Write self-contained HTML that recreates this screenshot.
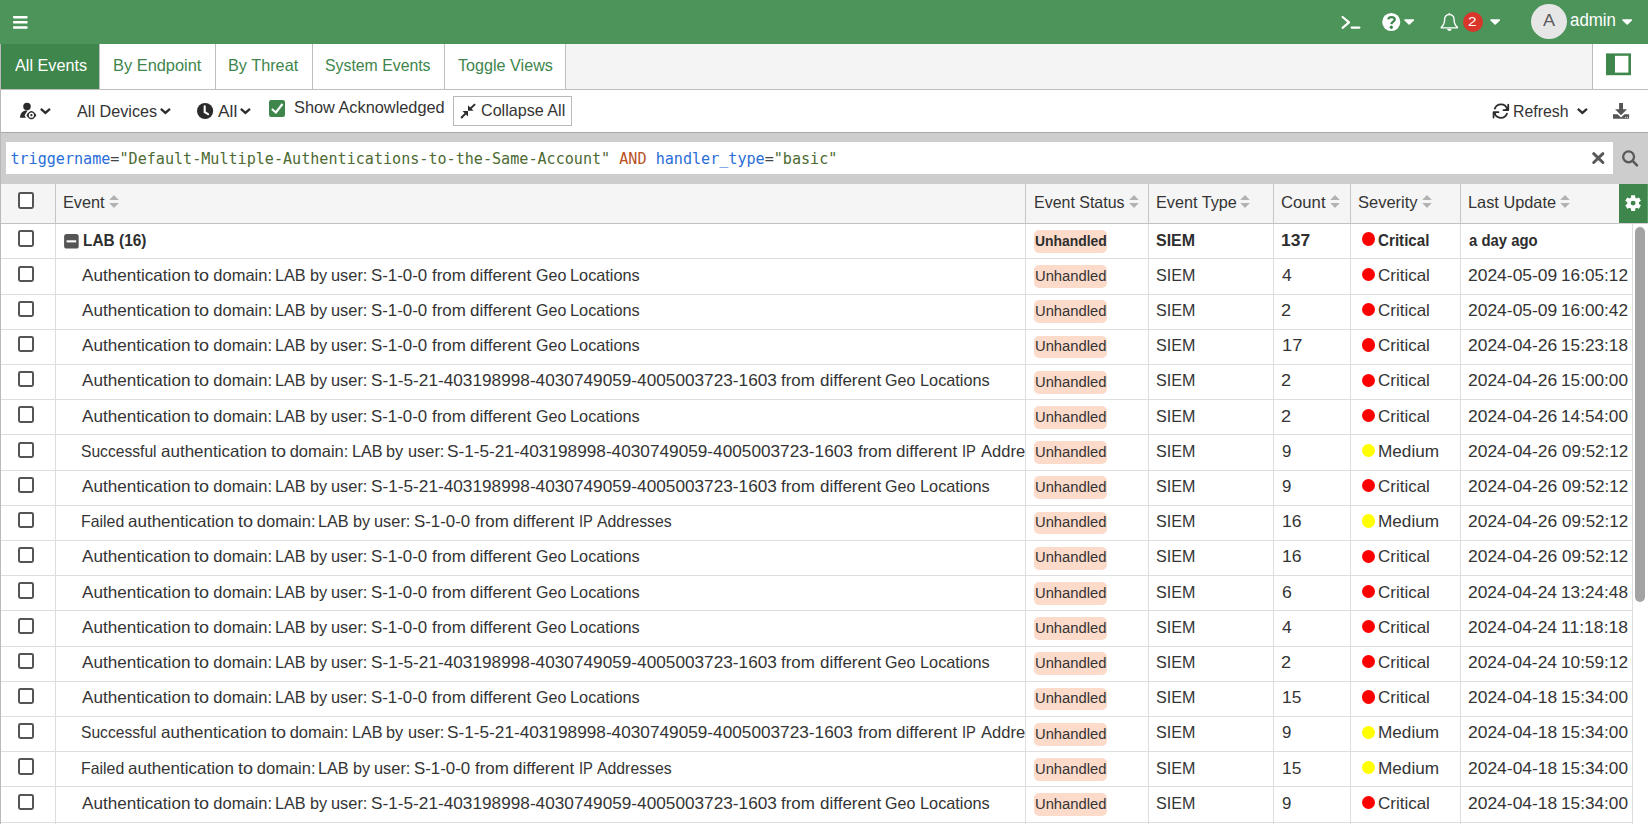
<!DOCTYPE html>
<html><head><meta charset="utf-8"><title>FortiAnalyzer - Event Monitor</title><style>
html,body{margin:0;padding:0;background:#fff}
body{width:1648px;height:824px;overflow:hidden;position:relative;font-family:'Liberation Sans',sans-serif;color:#343434}
.r{position:absolute;display:block}
.t{position:absolute;display:block;white-space:pre;line-height:30px;height:30px;transform-origin:0 0;font-size:16.5px}
.cb{width:11.6px;height:12.4px;border:2px solid #555;border-radius:2.4px;background:#fff}
.q{font-family:'DejaVu Sans Mono','Liberation Mono',monospace;font-size:15.1px;line-height:20px;white-space:pre}
</style></head><body>
<div class="r" style="left:0px;top:0px;width:1648px;height:44px;background:#4c9459;"></div>
<svg class="r" style="left:12px;top:15px" width="17" height="15" viewBox="0 0 17 15"><g fill="#fff"><rect x="1" y="1" width="14.6" height="2.4" rx="0.8"/><rect x="1" y="6.1" width="14.6" height="2.5" rx="0.8"/><rect x="1" y="11.2" width="14.6" height="2.5" rx="0.8"/></g></svg>
<svg class="r" style="left:1340px;top:14px" width="22" height="17" viewBox="0 0 22 17"><path d="M2.6 3 L9 8.4 L2.6 13.8" fill="none" stroke="#fff" stroke-width="2.2" stroke-linecap="round" stroke-linejoin="round"/><path d="M11.6 13.6 L19.4 13.6" stroke="#fff" stroke-width="2.2" stroke-linecap="round"/></svg>
<svg class="r" style="left:1381px;top:12px" width="21" height="21" viewBox="1381 12 21 21"><circle cx="1391.25" cy="22.02" r="9.05" fill="#fff"/><path d="M1388.35 19.45 C1388.6 17.75 1389.8 17.15 1391.45 17.15 C1393.4 17.15 1394.75 18.05 1394.75 19.6 C1394.75 21.7 1391.5 21.6 1391.4 24.1" fill="none" stroke="#3e864c" stroke-width="2.3" stroke-linecap="butt"/><circle cx="1391.3" cy="27.25" r="1.65" fill="#3e864c"/></svg>
<svg class="r" style="left:1404px;top:19px" width="10.4" height="6" viewBox="0 0 10.4 6"><path d="M1 1 L9.4 1 L5.2 5 Z" fill="#fff" stroke="#fff" stroke-width="1.6" stroke-linejoin="round"/></svg>
<svg class="r" style="left:1439px;top:11px" width="21" height="22" viewBox="1439 11 21 22"><path d="M1449.35 14.6 C1446.3 14.6 1444.6 16.9 1444.6 19.8 C1444.6 23.6 1443.4 25.6 1441.3 27.3 L1441.3 27.85 L1457.4 27.85 L1457.4 27.3 C1455.3 25.6 1454.1 23.6 1454.1 19.8 C1454.1 16.9 1452.4 14.6 1449.35 14.6 Z" fill="none" stroke="#fff" stroke-width="1.4" stroke-linejoin="round"/><circle cx="1449.35" cy="13.9" r="0.95" fill="#fff"/><path d="M1447.1 28.7 L1451.6 28.7 C1451.4 30.2 1450.5 30.95 1449.35 30.95 C1448.2 30.95 1447.3 30.2 1447.1 28.7 Z" fill="#fff"/></svg>
<div class="r" style="left:1462.9px;top:12.4px;width:20.1px;height:20.1px;border-radius:50%;background:#d9352b"></div>
<svg class="r" style="left:1490px;top:19px" width="10.4" height="6" viewBox="0 0 10.4 6"><path d="M1 1 L9.4 1 L5.2 5 Z" fill="#fff" stroke="#fff" stroke-width="1.6" stroke-linejoin="round"/></svg>
<div class="r" style="left:1531px;top:3.8px;width:36.1px;height:35.2px;border-radius:50%;background:#e6e6e6"></div>
<svg class="r" style="left:1622px;top:19px" width="10.4" height="6" viewBox="0 0 10.4 6"><path d="M1 1 L9.4 1 L5.2 5 Z" fill="#fff" stroke="#fff" stroke-width="1.6" stroke-linejoin="round"/></svg>
<div class="r" style="left:0px;top:44px;width:1648px;height:45px;background:#f4f4f4;"></div>
<div class="r" style="left:1px;top:44px;width:98px;height:45px;background:#3e864c;"></div>
<div class="r" style="left:99px;top:44px;width:466px;height:45px;background:#fff;"></div>
<div class="r" style="left:99px;top:44px;width:1px;height:45px;background:#bebebe;"></div>
<div class="r" style="left:215px;top:44px;width:1px;height:45px;background:#bebebe;"></div>
<div class="r" style="left:312px;top:44px;width:1px;height:45px;background:#bebebe;"></div>
<div class="r" style="left:444px;top:44px;width:1px;height:45px;background:#bebebe;"></div>
<div class="r" style="left:565px;top:44px;width:1px;height:45px;background:#bebebe;"></div>
<div class="r" style="left:1593px;top:44px;width:55px;height:45px;background:#fff;"></div>
<div class="r" style="left:1592px;top:44px;width:1px;height:45px;background:#bdbdbd;"></div>
<div class="r" style="left:0px;top:89px;width:1648px;height:1px;background:#bdbdbd;"></div>
<svg class="r" style="left:1606px;top:53px" width="26" height="23" viewBox="0 0 26 23"><rect x="0" y="0.4" width="25" height="21.8" fill="#3e864c"/><rect x="9" y="2.8" width="13.4" height="16.8" fill="#fff"/></svg>
<div class="r" style="left:0px;top:90px;width:1648px;height:42px;background:#fff;"></div>
<div class="r" style="left:0px;top:132px;width:1648px;height:1px;background:#a9a9a9;"></div>
<svg class="r" style="left:18px;top:100px" width="20" height="21" viewBox="18 100 20 21"><circle cx="27" cy="106.45" r="3.75" fill="#2b2b2b"/><path d="M20 117.8 C20.2 113.6 22.4 110.9 25.6 110.5 L27.7 110.4 L24.6 115.2 L25.9 117.8 Z" fill="#2b2b2b"/><path d="M26.4 115.15 C28.4 112.1 30 111.05 31.4 111.05 C32.8 111.05 34.4 112.1 36.4 115.15 C34.4 118.2 32.8 119.25 31.4 119.25 C30 119.25 28.4 118.2 26.4 115.15 Z" fill="#2b2b2b"/><circle cx="31.4" cy="115.15" r="2.55" fill="#fff"/><circle cx="31.4" cy="115.15" r="1.1" fill="#2b2b2b"/></svg>
<svg class="r" style="left:39.85px;top:107.75px" width="11" height="7" viewBox="0 0 11 7"><path d="M0.85 0.95 L5.4 4.95 L9.95 0.95" fill="none" stroke="#2f2f2f" stroke-width="2.3" stroke-linecap="butt" stroke-linejoin="miter"/></svg>
<svg class="r" style="left:159.9px;top:107.75px" width="11" height="7" viewBox="0 0 11 7"><path d="M0.85 0.95 L5.4 4.95 L9.95 0.95" fill="none" stroke="#2f2f2f" stroke-width="2.3" stroke-linecap="butt" stroke-linejoin="miter"/></svg>
<svg class="r" style="left:196px;top:102px" width="18" height="18" viewBox="196 102 18 18"><circle cx="205.1" cy="111" r="8.1" fill="#2b2b2b"/><path d="M204.7 106.3 L204.7 112.1 L208.1 114.1" fill="none" stroke="#fff" stroke-width="2.1" stroke-linecap="round" stroke-linejoin="miter"/></svg>
<svg class="r" style="left:239.95px;top:107.75px" width="11" height="7" viewBox="0 0 11 7"><path d="M0.85 0.95 L5.4 4.95 L9.95 0.95" fill="none" stroke="#2f2f2f" stroke-width="2.3" stroke-linecap="butt" stroke-linejoin="miter"/></svg>
<svg class="r" style="left:268px;top:99px" width="18" height="19" viewBox="268 99 18 19"><rect x="269" y="99.9" width="16" height="17" rx="2.2" fill="#3e864c"/><path d="M271.9 109 L275.9 112.5 L282.5 104" fill="none" stroke="#fff" stroke-width="2.1" stroke-linecap="butt" stroke-linejoin="miter"/></svg>
<div class="r" style="left:453px;top:96px;width:117px;height:28px;border:1px solid #b9b9b9;background:#fff"></div>
<svg class="r" style="left:460px;top:103px" width="17" height="16" viewBox="460 103 17 16"><g stroke="#2b2b2b" stroke-width="2" fill="none"><path d="M475.1 104.1 L470.6 108.4"/><path d="M461.1 118 L465.5 113.6"/></g><path d="M468 110.8 L468 105.3 L473.6 110.8 Z" fill="#2b2b2b"/><path d="M468 111.1 L462.5 111.1 L468 116.6 Z" fill="#2b2b2b"/></svg>
<svg class="r" style="left:1491px;top:102px" width="20" height="18" viewBox="1491 102 20 18"><g fill="none" stroke="#2b2b2b" stroke-width="1.75" stroke-linecap="round" stroke-linejoin="round"><path d="M1494.8 108.6 A6.6 6.6 0 0 1 1507.2 108.9"/><path d="M1508.25 104.7 L1508.25 110.05 L1503.4 110.05"/><path d="M1507.0 113.6 A6.6 6.6 0 0 1 1494.6 113.3"/><path d="M1493.55 117.5 L1493.55 112.15 L1498.4 112.15"/></g><path d="M1508.25 106.2 L1508.25 110.05 L1504.6 110.05 Z" fill="#2b2b2b"/><path d="M1493.55 116 L1493.55 112.15 L1497.2 112.15 Z" fill="#2b2b2b"/></svg>
<svg class="r" style="left:1576.9px;top:107.7px" width="11" height="7" viewBox="0 0 11 7"><path d="M0.85 0.95 L5.4 4.95 L9.95 0.95" fill="none" stroke="#2f2f2f" stroke-width="2.3" stroke-linecap="butt" stroke-linejoin="miter"/></svg>
<svg class="r" style="left:1612px;top:102px" width="18" height="18" viewBox="1612 102 18 18"><path d="M1619.1 102.9 L1623 102.9 L1623 109.2 L1627 109.2 L1621.05 115.3 L1615.1 109.2 L1619.1 109.2 Z" fill="#555"/><path d="M1613 114.2 L1617.6 114.2 L1621.05 117.4 L1624.5 114.2 L1629.1 114.2 L1629.1 118.7 L1613 118.7 Z" fill="#555"/><rect x="1625" y="116.8" width="1.1" height="1.1" fill="#ddd"/><rect x="1626.9" y="116.8" width="1.1" height="1.1" fill="#ddd"/></svg>
<div class="r" style="left:0px;top:133px;width:1648px;height:51px;background:#cdcdcd;"></div>
<div class="r" style="left:6px;top:142px;width:1607px;height:32px;background:#fff;"></div>
<div class="r q" style="left:10.4px;top:149px;"><span style="color:#2a6ed8">triggername</span><span style="color:#444">=</span><span style="color:#4d6a32">"Default-Multiple-Authentications-to-the-Same-Account"</span> <span style="color:#b9521f">AND</span> <span style="color:#2a6ed8">handler_type</span><span style="color:#444">=</span><span style="color:#4d6a32">"basic"</span></div>
<svg class="r" style="left:1591px;top:151px" width="15" height="15" viewBox="1591 151 15 15"><path d="M1593.7 153.7 L1602.9 162.5 M1602.9 153.7 L1593.7 162.5" stroke="#595959" stroke-width="3" stroke-linecap="round"/></svg>
<svg class="r" style="left:1620px;top:148px" width="20" height="20" viewBox="1620 148 20 20"><circle cx="1628.6" cy="156.8" r="5.45" fill="none" stroke="#595959" stroke-width="2.3"/><path d="M1632.9 161.1 L1637.0 165.3" stroke="#595959" stroke-width="2.5" stroke-linecap="round"/></svg>
<div class="r" style="left:0px;top:184px;width:1648px;height:39px;background:#f5f5f5;"></div>
<div class="r" style="left:1619px;top:184px;width:29px;height:39px;background:#3e864c;"></div>
<div class="r" style="left:55px;top:184px;width:1px;height:39px;background:#c6c6c6;"></div>
<div class="r" style="left:1025px;top:184px;width:1px;height:39px;background:#c6c6c6;"></div>
<div class="r" style="left:1148px;top:184px;width:1px;height:39px;background:#c6c6c6;"></div>
<div class="r" style="left:1273px;top:184px;width:1px;height:39px;background:#c6c6c6;"></div>
<div class="r" style="left:1350px;top:184px;width:1px;height:39px;background:#c6c6c6;"></div>
<div class="r" style="left:1460px;top:184px;width:1px;height:39px;background:#c6c6c6;"></div>
<div class="r" style="left:0px;top:223px;width:1648px;height:1px;background:#c2c2c2;"></div>
<div class="r" style="left:1619px;top:223px;width:29px;height:1px;background:#d6d0d6;"></div>
<div class="r" style="left:1647px;top:184px;width:1px;height:39px;background:#5f9f6c;"></div>
<div class="r cb" style="left:18.3px;top:192.3px"></div>
<svg class="r" style="left:109px;top:195px" width="10" height="13" viewBox="0 0 10 13"><path d="M5 0 L9.8 5.1 L0.2 5.1 Z M0.2 7.9 L9.8 7.9 L5 13 Z" fill="#b2b2b2"/></svg>
<svg class="r" style="left:1129px;top:195px" width="10" height="13" viewBox="0 0 10 13"><path d="M5 0 L9.8 5.1 L0.2 5.1 Z M0.2 7.9 L9.8 7.9 L5 13 Z" fill="#b2b2b2"/></svg>
<svg class="r" style="left:1240px;top:195px" width="10" height="13" viewBox="0 0 10 13"><path d="M5 0 L9.8 5.1 L0.2 5.1 Z M0.2 7.9 L9.8 7.9 L5 13 Z" fill="#b2b2b2"/></svg>
<svg class="r" style="left:1330px;top:195px" width="10" height="13" viewBox="0 0 10 13"><path d="M5 0 L9.8 5.1 L0.2 5.1 Z M0.2 7.9 L9.8 7.9 L5 13 Z" fill="#b2b2b2"/></svg>
<svg class="r" style="left:1422px;top:195px" width="10" height="13" viewBox="0 0 10 13"><path d="M5 0 L9.8 5.1 L0.2 5.1 Z M0.2 7.9 L9.8 7.9 L5 13 Z" fill="#b2b2b2"/></svg>
<svg class="r" style="left:1560px;top:195px" width="10" height="13" viewBox="0 0 10 13"><path d="M5 0 L9.8 5.1 L0.2 5.1 Z M0.2 7.9 L9.8 7.9 L5 13 Z" fill="#b2b2b2"/></svg>
<svg class="r" style="left:1624px;top:194px" width="19" height="19" viewBox="1624 194 19 19"><g transform="translate(1633.1 203.1)" fill="#fff"><path d="M-2.3 -4.6 L-1.95 -7.85 L1.95 -7.85 L2.3 -4.6 Z" transform="rotate(0)"/><path d="M-2.3 -4.6 L-1.95 -7.85 L1.95 -7.85 L2.3 -4.6 Z" transform="rotate(60)"/><path d="M-2.3 -4.6 L-1.95 -7.85 L1.95 -7.85 L2.3 -4.6 Z" transform="rotate(120)"/><path d="M-2.3 -4.6 L-1.95 -7.85 L1.95 -7.85 L2.3 -4.6 Z" transform="rotate(180)"/><path d="M-2.3 -4.6 L-1.95 -7.85 L1.95 -7.85 L2.3 -4.6 Z" transform="rotate(240)"/><path d="M-2.3 -4.6 L-1.95 -7.85 L1.95 -7.85 L2.3 -4.6 Z" transform="rotate(300)"/><circle r="5.85"/></g><circle cx="1633.1" cy="203.1" r="2.45" fill="#3e864c"/></svg>
<div class="r" style="left:0px;top:224px;width:1648px;height:600px;background:#fff;"></div>
<div class="r" style="left:55px;top:224px;width:1px;height:600px;background:#dedede;"></div>
<div class="r" style="left:1025px;top:224px;width:1px;height:600px;background:#dedede;"></div>
<div class="r" style="left:1148px;top:224px;width:1px;height:600px;background:#dedede;"></div>
<div class="r" style="left:1273px;top:224px;width:1px;height:600px;background:#dedede;"></div>
<div class="r" style="left:1350px;top:224px;width:1px;height:600px;background:#dedede;"></div>
<div class="r" style="left:1460px;top:224px;width:1px;height:600px;background:#dedede;"></div>
<div class="r" style="left:1632px;top:224px;width:1px;height:600px;background:#dedede;"></div>
<div class="r" style="left:1px;top:258px;width:1632px;height:1px;background:#dedede;"></div>
<div class="r" style="left:1px;top:294px;width:1632px;height:1px;background:#dedede;"></div>
<div class="r" style="left:1px;top:329px;width:1632px;height:1px;background:#dedede;"></div>
<div class="r" style="left:1px;top:364px;width:1632px;height:1px;background:#dedede;"></div>
<div class="r" style="left:1px;top:399px;width:1632px;height:1px;background:#dedede;"></div>
<div class="r" style="left:1px;top:434px;width:1632px;height:1px;background:#dedede;"></div>
<div class="r" style="left:1px;top:470px;width:1632px;height:1px;background:#dedede;"></div>
<div class="r" style="left:1px;top:505px;width:1632px;height:1px;background:#dedede;"></div>
<div class="r" style="left:1px;top:540px;width:1632px;height:1px;background:#dedede;"></div>
<div class="r" style="left:1px;top:575px;width:1632px;height:1px;background:#dedede;"></div>
<div class="r" style="left:1px;top:610px;width:1632px;height:1px;background:#dedede;"></div>
<div class="r" style="left:1px;top:646px;width:1632px;height:1px;background:#dedede;"></div>
<div class="r" style="left:1px;top:681px;width:1632px;height:1px;background:#dedede;"></div>
<div class="r" style="left:1px;top:716px;width:1632px;height:1px;background:#dedede;"></div>
<div class="r" style="left:1px;top:751px;width:1632px;height:1px;background:#dedede;"></div>
<div class="r" style="left:1px;top:786px;width:1632px;height:1px;background:#dedede;"></div>
<div class="r" style="left:1px;top:822px;width:1632px;height:1px;background:#dedede;"></div>
<div class="r cb" style="left:18.3px;top:230.3px"></div>
<svg class="r" style="left:64px;top:233.9px" width="15" height="15" viewBox="0 0 15 15"><rect x="0.1" y="0.1" width="14.6" height="14.4" rx="2.6" fill="#555"/><rect x="2.6" y="6.3" width="9.6" height="2.1" fill="#fff"/></svg>
<div class="r" style="left:1034px;top:230.0px;width:72.9px;height:22.8px;border-radius:5px;background:#fddbcb"></div>
<div class="r" style="left:1362px;top:232px;width:13.1px;height:14px;border-radius:50%;background:#ff0000"></div>
<div class="r cb" style="left:18.3px;top:265.5px"></div>
<div class="r" style="left:1034px;top:265.2px;width:72.9px;height:22.8px;border-radius:5px;background:#fddbcb"></div>
<div class="r" style="left:1362px;top:268.0px;width:13.2px;height:13.2px;border-radius:50%;background:#ff0000"></div>
<div class="r cb" style="left:18.3px;top:300.70000000000005px"></div>
<div class="r" style="left:1034px;top:300.4px;width:72.9px;height:22.8px;border-radius:5px;background:#fddbcb"></div>
<div class="r" style="left:1362px;top:303.2px;width:13.2px;height:13.2px;border-radius:50%;background:#ff0000"></div>
<div class="r cb" style="left:18.3px;top:335.90000000000003px"></div>
<div class="r" style="left:1034px;top:335.6px;width:72.9px;height:22.8px;border-radius:5px;background:#fddbcb"></div>
<div class="r" style="left:1362px;top:338.4px;width:13.2px;height:13.2px;border-radius:50%;background:#ff0000"></div>
<div class="r cb" style="left:18.3px;top:371.1px"></div>
<div class="r" style="left:1034px;top:370.8px;width:72.9px;height:22.8px;border-radius:5px;background:#fddbcb"></div>
<div class="r" style="left:1362px;top:373.6px;width:13.2px;height:13.2px;border-radius:50%;background:#ff0000"></div>
<div class="r cb" style="left:18.3px;top:406.3px"></div>
<div class="r" style="left:1034px;top:406.0px;width:72.9px;height:22.8px;border-radius:5px;background:#fddbcb"></div>
<div class="r" style="left:1362px;top:408.8px;width:13.2px;height:13.2px;border-radius:50%;background:#ff0000"></div>
<div class="r cb" style="left:18.3px;top:441.5px"></div>
<div class="r" style="left:1034px;top:441.2px;width:72.9px;height:22.8px;border-radius:5px;background:#fddbcb"></div>
<div class="r" style="left:1362px;top:444.0px;width:13.2px;height:13.2px;border-radius:50%;background:#ffff00"></div>
<div class="r cb" style="left:18.3px;top:476.70000000000005px"></div>
<div class="r" style="left:1034px;top:476.4px;width:72.9px;height:22.8px;border-radius:5px;background:#fddbcb"></div>
<div class="r" style="left:1362px;top:479.2px;width:13.2px;height:13.2px;border-radius:50%;background:#ff0000"></div>
<div class="r cb" style="left:18.3px;top:511.90000000000003px"></div>
<div class="r" style="left:1034px;top:511.6px;width:72.9px;height:22.8px;border-radius:5px;background:#fddbcb"></div>
<div class="r" style="left:1362px;top:514.4px;width:13.2px;height:13.2px;border-radius:50%;background:#ffff00"></div>
<div class="r cb" style="left:18.3px;top:547.1px"></div>
<div class="r" style="left:1034px;top:546.8px;width:72.9px;height:22.8px;border-radius:5px;background:#fddbcb"></div>
<div class="r" style="left:1362px;top:549.6px;width:13.2px;height:13.2px;border-radius:50%;background:#ff0000"></div>
<div class="r cb" style="left:18.3px;top:582.3px"></div>
<div class="r" style="left:1034px;top:582.0px;width:72.9px;height:22.8px;border-radius:5px;background:#fddbcb"></div>
<div class="r" style="left:1362px;top:584.8px;width:13.2px;height:13.2px;border-radius:50%;background:#ff0000"></div>
<div class="r cb" style="left:18.3px;top:617.5px"></div>
<div class="r" style="left:1034px;top:617.2px;width:72.9px;height:22.8px;border-radius:5px;background:#fddbcb"></div>
<div class="r" style="left:1362px;top:620.0px;width:13.2px;height:13.2px;border-radius:50%;background:#ff0000"></div>
<div class="r cb" style="left:18.3px;top:652.7px"></div>
<div class="r" style="left:1034px;top:652.4px;width:72.9px;height:22.8px;border-radius:5px;background:#fddbcb"></div>
<div class="r" style="left:1362px;top:655.2px;width:13.2px;height:13.2px;border-radius:50%;background:#ff0000"></div>
<div class="r cb" style="left:18.3px;top:687.9000000000001px"></div>
<div class="r" style="left:1034px;top:687.6px;width:72.9px;height:22.8px;border-radius:5px;background:#fddbcb"></div>
<div class="r" style="left:1362px;top:690.4px;width:13.2px;height:13.2px;border-radius:50%;background:#ff0000"></div>
<div class="r cb" style="left:18.3px;top:723.1000000000001px"></div>
<div class="r" style="left:1034px;top:722.8px;width:72.9px;height:22.8px;border-radius:5px;background:#fddbcb"></div>
<div class="r" style="left:1362px;top:725.6px;width:13.2px;height:13.2px;border-radius:50%;background:#ffff00"></div>
<div class="r cb" style="left:18.3px;top:758.3px"></div>
<div class="r" style="left:1034px;top:758.0px;width:72.9px;height:22.8px;border-radius:5px;background:#fddbcb"></div>
<div class="r" style="left:1362px;top:760.8px;width:13.2px;height:13.2px;border-radius:50%;background:#ffff00"></div>
<div class="r cb" style="left:18.3px;top:793.5px"></div>
<div class="r" style="left:1034px;top:793.2px;width:72.9px;height:22.8px;border-radius:5px;background:#fddbcb"></div>
<div class="r" style="left:1362px;top:796.0px;width:13.2px;height:13.2px;border-radius:50%;background:#ff0000"></div>
<div class="r" style="left:1635.2px;top:227px;width:9.6px;height:375px;border-radius:5px;background:#a3a3a3"></div>
<div class="r" style="left:0px;top:44px;width:1px;height:780px;background:#b9b9b9;"></div>
<span class="t" style="left:1570.28px;top:5px;font-size:17.6px;color:#fff;transform:scaleX(0.9587);">admin</span>
<span class="t" style="left:1543.30px;top:6px;font-size:17.0px;color:#5a5a5a;transform:scaleX(1.0667);">A</span>
<span class="t" style="left:1468.41px;top:7px;font-size:13px;color:#fff;transform:scaleX(1.1826);">2</span>
<span class="t" style="left:14.75px;top:50px;font-size:16.5px;color:#fff;transform:scaleX(0.9828);">All Events</span>
<span class="t" style="left:113.06px;top:50px;font-size:16.5px;color:#3e864c;transform:scaleX(0.9937);">By Endpoint</span>
<span class="t" style="left:228.02px;top:50px;font-size:16.5px;color:#3e864c;transform:scaleX(0.9857);">By Threat</span>
<span class="t" style="left:325.48px;top:50px;font-size:16.5px;color:#3e864c;transform:scaleX(0.9591);">System Events</span>
<span class="t" style="left:457.76px;top:50px;font-size:16.5px;color:#3e864c;transform:scaleX(0.9792);">Toggle Views</span>
<span class="t" style="left:77.40px;top:96px;font-size:16.5px;transform:scaleX(0.9815);">All Devices</span>
<span class="t" style="left:218.00px;top:96px;font-size:16.5px;transform:scaleX(1.0493);">All</span>
<span class="t" style="left:293.86px;top:92px;font-size:16.5px;transform:scaleX(0.9894);">Show Acknowledged</span>
<span class="t" style="left:480.97px;top:95px;font-size:16.5px;transform:scaleX(0.9775);">Collapse All</span>
<span class="t" style="left:1513.20px;top:96px;font-size:16.5px;transform:scaleX(0.9622);">Refresh</span>
<span class="t" style="left:63.37px;top:187px;font-size:16.5px;transform:scaleX(0.9853);">Event</span>
<span class="t" style="left:1034.04px;top:187px;font-size:16.5px;transform:scaleX(0.9673);">Event Status</span>
<span class="t" style="left:1155.97px;top:187px;font-size:16.5px;transform:scaleX(0.9819);">Event Type</span>
<span class="t" style="left:1281.24px;top:187px;font-size:16.5px;transform:scaleX(1.0116);">Count</span>
<span class="t" style="left:1358.00px;top:187px;font-size:16.5px;transform:scaleX(1.0000);">Severity</span>
<span class="t" style="left:1468.16px;top:187px;font-size:16.5px;transform:scaleX(0.9897);">Last Update</span>
<span class="t" style="left:82.56px;top:225px;font-size:16.5px;font-weight:700;color:#2e2e2e;transform:scaleX(0.9356);">LAB (16)</span>
<span class="t" style="left:1035.10px;top:226px;font-size:15.4px;font-weight:700;color:#2e2e2e;transform:scaleX(0.9032);">Unhandled</span>
<span class="t" style="left:1156.02px;top:225px;font-size:16.5px;font-weight:700;color:#2e2e2e;transform:scaleX(0.9677);">SIEM</span>
<span class="t" style="left:1281.19px;top:225px;font-size:16.5px;font-weight:700;color:#2e2e2e;transform:scaleX(1.0583);">137</span>
<span class="t" style="left:1378.31px;top:225px;font-size:16.5px;font-weight:700;color:#2e2e2e;transform:scaleX(0.9204);">Critical</span>
<span class="t" style="left:1468.55px;top:225px;font-size:16.5px;font-weight:700;color:#2e2e2e;transform:scaleX(0.9013);">a day ago</span>
<span class="t" style="left:82.20px;top:260px;font-size:16.5px;transform:scaleX(1.0367);">Authentication </span>
<span class="t" style="left:194.23px;top:260px;font-size:16.5px;transform:scaleX(1.0902);">to </span>
<span class="t" style="left:213.35px;top:260px;font-size:16.5px;transform:scaleX(1.0000);">domain: </span>
<span class="t" style="left:275.47px;top:260px;font-size:16.5px;transform:scaleX(0.9828);">LAB </span>
<span class="t" style="left:310.02px;top:260px;font-size:16.5px;transform:scaleX(0.9846);">by </span>
<span class="t" style="left:331.41px;top:260px;font-size:16.5px;transform:scaleX(0.9927);">user: </span>
<span class="t" style="left:371.13px;top:260px;font-size:16.5px;transform:scaleX(1.0224);">S-1-0-0 </span>
<span class="t" style="left:431.74px;top:260px;font-size:16.5px;transform:scaleX(1.0268);">from </span>
<span class="t" style="left:470.23px;top:260px;font-size:16.5px;transform:scaleX(1.0308);">different </span>
<span class="t" style="left:535.87px;top:260px;font-size:16.5px;transform:scaleX(0.9714);">Geo </span>
<span class="t" style="left:569.97px;top:260px;font-size:16.5px;transform:scaleX(0.9876);">Locations</span>
<span class="t" style="left:1034.90px;top:261px;font-size:15.4px;transform:scaleX(0.9592);">Unhandled</span>
<span class="t" style="left:1156.17px;top:260px;font-size:16.5px;transform:scaleX(0.9752);">SIEM</span>
<span class="t" style="left:1281.74px;top:260px;font-size:16.5px;transform:scaleX(1.0588);">4</span>
<span class="t" style="left:1378.13px;top:260px;font-size:16.5px;transform:scaleX(1.0289);">Critical</span>
<span class="t" style="left:1468.21px;top:260px;font-size:16.5px;transform:scaleX(1.0578);">2024-05-09</span>
<span class="t" style="left:1561.10px;top:260px;font-size:16.5px;transform:scaleX(1.0426);">16:05:12</span>
<span class="t" style="left:82.20px;top:295px;font-size:16.5px;transform:scaleX(1.0367);">Authentication </span>
<span class="t" style="left:194.23px;top:295px;font-size:16.5px;transform:scaleX(1.0902);">to </span>
<span class="t" style="left:213.35px;top:295px;font-size:16.5px;transform:scaleX(1.0000);">domain: </span>
<span class="t" style="left:275.47px;top:295px;font-size:16.5px;transform:scaleX(0.9828);">LAB </span>
<span class="t" style="left:310.02px;top:295px;font-size:16.5px;transform:scaleX(0.9846);">by </span>
<span class="t" style="left:331.41px;top:295px;font-size:16.5px;transform:scaleX(0.9927);">user: </span>
<span class="t" style="left:371.13px;top:295px;font-size:16.5px;transform:scaleX(1.0224);">S-1-0-0 </span>
<span class="t" style="left:431.74px;top:295px;font-size:16.5px;transform:scaleX(1.0268);">from </span>
<span class="t" style="left:470.23px;top:295px;font-size:16.5px;transform:scaleX(1.0308);">different </span>
<span class="t" style="left:535.87px;top:295px;font-size:16.5px;transform:scaleX(0.9714);">Geo </span>
<span class="t" style="left:569.97px;top:295px;font-size:16.5px;transform:scaleX(0.9876);">Locations</span>
<span class="t" style="left:1034.90px;top:296px;font-size:15.4px;transform:scaleX(0.9592);">Unhandled</span>
<span class="t" style="left:1156.17px;top:295px;font-size:16.5px;transform:scaleX(0.9752);">SIEM</span>
<span class="t" style="left:1281.28px;top:295px;font-size:16.5px;transform:scaleX(1.0933);">2</span>
<span class="t" style="left:1378.13px;top:295px;font-size:16.5px;transform:scaleX(1.0289);">Critical</span>
<span class="t" style="left:1468.21px;top:295px;font-size:16.5px;transform:scaleX(1.0578);">2024-05-09</span>
<span class="t" style="left:1561.10px;top:295px;font-size:16.5px;transform:scaleX(1.0426);">16:00:42</span>
<span class="t" style="left:82.20px;top:330px;font-size:16.5px;transform:scaleX(1.0367);">Authentication </span>
<span class="t" style="left:194.23px;top:330px;font-size:16.5px;transform:scaleX(1.0902);">to </span>
<span class="t" style="left:213.35px;top:330px;font-size:16.5px;transform:scaleX(1.0000);">domain: </span>
<span class="t" style="left:275.47px;top:330px;font-size:16.5px;transform:scaleX(0.9828);">LAB </span>
<span class="t" style="left:310.02px;top:330px;font-size:16.5px;transform:scaleX(0.9846);">by </span>
<span class="t" style="left:331.41px;top:330px;font-size:16.5px;transform:scaleX(0.9927);">user: </span>
<span class="t" style="left:371.13px;top:330px;font-size:16.5px;transform:scaleX(1.0224);">S-1-0-0 </span>
<span class="t" style="left:431.74px;top:330px;font-size:16.5px;transform:scaleX(1.0268);">from </span>
<span class="t" style="left:470.23px;top:330px;font-size:16.5px;transform:scaleX(1.0308);">different </span>
<span class="t" style="left:535.87px;top:330px;font-size:16.5px;transform:scaleX(0.9714);">Geo </span>
<span class="t" style="left:569.97px;top:330px;font-size:16.5px;transform:scaleX(0.9876);">Locations</span>
<span class="t" style="left:1034.90px;top:331px;font-size:15.4px;transform:scaleX(0.9592);">Unhandled</span>
<span class="t" style="left:1156.17px;top:330px;font-size:16.5px;transform:scaleX(0.9752);">SIEM</span>
<span class="t" style="left:1281.62px;top:330px;font-size:16.5px;transform:scaleX(1.1077);">17</span>
<span class="t" style="left:1378.13px;top:330px;font-size:16.5px;transform:scaleX(1.0289);">Critical</span>
<span class="t" style="left:1468.21px;top:330px;font-size:16.5px;transform:scaleX(1.0578);">2024-04-26</span>
<span class="t" style="left:1561.10px;top:330px;font-size:16.5px;transform:scaleX(1.0426);">15:23:18</span>
<span class="t" style="left:82.20px;top:365px;font-size:16.5px;transform:scaleX(1.0367);">Authentication </span>
<span class="t" style="left:194.23px;top:365px;font-size:16.5px;transform:scaleX(1.0902);">to </span>
<span class="t" style="left:213.35px;top:365px;font-size:16.5px;transform:scaleX(1.0000);">domain: </span>
<span class="t" style="left:275.47px;top:365px;font-size:16.5px;transform:scaleX(0.9828);">LAB </span>
<span class="t" style="left:310.02px;top:365px;font-size:16.5px;transform:scaleX(0.9846);">by </span>
<span class="t" style="left:331.41px;top:365px;font-size:16.5px;transform:scaleX(0.9927);">user: </span>
<span class="t" style="left:371.12px;top:365px;font-size:16.5px;transform:scaleX(1.0434);">S-1-5-21-403198998-4030749059-4005003723-1603 </span>
<span class="t" style="left:781.34px;top:365px;font-size:16.5px;transform:scaleX(1.0268);">from </span>
<span class="t" style="left:819.83px;top:365px;font-size:16.5px;transform:scaleX(1.0308);">different </span>
<span class="t" style="left:885.47px;top:365px;font-size:16.5px;transform:scaleX(0.9714);">Geo </span>
<span class="t" style="left:919.57px;top:365px;font-size:16.5px;transform:scaleX(0.9876);">Locations</span>
<span class="t" style="left:1034.90px;top:367px;font-size:15.4px;transform:scaleX(0.9592);">Unhandled</span>
<span class="t" style="left:1156.17px;top:365px;font-size:16.5px;transform:scaleX(0.9752);">SIEM</span>
<span class="t" style="left:1281.28px;top:365px;font-size:16.5px;transform:scaleX(1.0933);">2</span>
<span class="t" style="left:1378.13px;top:365px;font-size:16.5px;transform:scaleX(1.0289);">Critical</span>
<span class="t" style="left:1468.21px;top:365px;font-size:16.5px;transform:scaleX(1.0578);">2024-04-26</span>
<span class="t" style="left:1561.10px;top:365px;font-size:16.5px;transform:scaleX(1.0426);">15:00:00</span>
<span class="t" style="left:82.20px;top:401px;font-size:16.5px;transform:scaleX(1.0367);">Authentication </span>
<span class="t" style="left:194.23px;top:401px;font-size:16.5px;transform:scaleX(1.0902);">to </span>
<span class="t" style="left:213.35px;top:401px;font-size:16.5px;transform:scaleX(1.0000);">domain: </span>
<span class="t" style="left:275.47px;top:401px;font-size:16.5px;transform:scaleX(0.9828);">LAB </span>
<span class="t" style="left:310.02px;top:401px;font-size:16.5px;transform:scaleX(0.9846);">by </span>
<span class="t" style="left:331.41px;top:401px;font-size:16.5px;transform:scaleX(0.9927);">user: </span>
<span class="t" style="left:371.13px;top:401px;font-size:16.5px;transform:scaleX(1.0224);">S-1-0-0 </span>
<span class="t" style="left:431.74px;top:401px;font-size:16.5px;transform:scaleX(1.0268);">from </span>
<span class="t" style="left:470.23px;top:401px;font-size:16.5px;transform:scaleX(1.0308);">different </span>
<span class="t" style="left:535.87px;top:401px;font-size:16.5px;transform:scaleX(0.9714);">Geo </span>
<span class="t" style="left:569.97px;top:401px;font-size:16.5px;transform:scaleX(0.9876);">Locations</span>
<span class="t" style="left:1034.90px;top:402px;font-size:15.4px;transform:scaleX(0.9592);">Unhandled</span>
<span class="t" style="left:1156.17px;top:401px;font-size:16.5px;transform:scaleX(0.9752);">SIEM</span>
<span class="t" style="left:1281.28px;top:401px;font-size:16.5px;transform:scaleX(1.0933);">2</span>
<span class="t" style="left:1378.13px;top:401px;font-size:16.5px;transform:scaleX(1.0289);">Critical</span>
<span class="t" style="left:1468.21px;top:401px;font-size:16.5px;transform:scaleX(1.0578);">2024-04-26</span>
<span class="t" style="left:1561.10px;top:401px;font-size:16.5px;transform:scaleX(1.0426);">14:54:00</span>
<span class="t" style="left:81.49px;top:436px;font-size:16.5px;transform:scaleX(0.9474);">Successful </span>
<span class="t" style="left:160.73px;top:436px;font-size:16.5px;transform:scaleX(1.0307);">authentication </span>
<span class="t" style="left:270.73px;top:436px;font-size:16.5px;transform:scaleX(1.0902);">to </span>
<span class="t" style="left:289.65px;top:436px;font-size:16.5px;transform:scaleX(1.0000);">domain: </span>
<span class="t" style="left:351.67px;top:436px;font-size:16.5px;transform:scaleX(0.9828);">LAB </span>
<span class="t" style="left:386.12px;top:436px;font-size:16.5px;transform:scaleX(0.9846);">by </span>
<span class="t" style="left:407.51px;top:436px;font-size:16.5px;transform:scaleX(0.9927);">user: </span>
<span class="t" style="left:447.22px;top:436px;font-size:16.5px;transform:scaleX(1.0434);">S-1-5-21-403198998-4030749059-4005003723-1603 </span>
<span class="t" style="left:858.14px;top:436px;font-size:16.5px;transform:scaleX(1.0268);">from </span>
<span class="t" style="left:896.23px;top:436px;font-size:16.5px;transform:scaleX(1.0308);">different </span>
<span class="t" style="left:962.36px;top:436px;font-size:16.5px;transform:scaleX(0.8906);">IP </span>
<span class="t" style="left:980.50px;top:436px;font-size:16.5px;transform:scaleX(1.0012);width:43.85px;overflow:hidden;">Addresses</span>
<span class="t" style="left:1034.90px;top:437px;font-size:15.4px;transform:scaleX(0.9592);">Unhandled</span>
<span class="t" style="left:1156.17px;top:436px;font-size:16.5px;transform:scaleX(0.9752);">SIEM</span>
<span class="t" style="left:1281.54px;top:436px;font-size:16.5px;transform:scaleX(1.0194);">9</span>
<span class="t" style="left:1377.95px;top:436px;font-size:16.5px;transform:scaleX(1.0409);">Medium</span>
<span class="t" style="left:1468.21px;top:436px;font-size:16.5px;transform:scaleX(1.0578);">2024-04-26</span>
<span class="t" style="left:1561.88px;top:436px;font-size:16.5px;transform:scaleX(1.0302);">09:52:12</span>
<span class="t" style="left:82.20px;top:471px;font-size:16.5px;transform:scaleX(1.0367);">Authentication </span>
<span class="t" style="left:194.23px;top:471px;font-size:16.5px;transform:scaleX(1.0902);">to </span>
<span class="t" style="left:213.35px;top:471px;font-size:16.5px;transform:scaleX(1.0000);">domain: </span>
<span class="t" style="left:275.47px;top:471px;font-size:16.5px;transform:scaleX(0.9828);">LAB </span>
<span class="t" style="left:310.02px;top:471px;font-size:16.5px;transform:scaleX(0.9846);">by </span>
<span class="t" style="left:331.41px;top:471px;font-size:16.5px;transform:scaleX(0.9927);">user: </span>
<span class="t" style="left:371.12px;top:471px;font-size:16.5px;transform:scaleX(1.0434);">S-1-5-21-403198998-4030749059-4005003723-1603 </span>
<span class="t" style="left:781.34px;top:471px;font-size:16.5px;transform:scaleX(1.0268);">from </span>
<span class="t" style="left:819.83px;top:471px;font-size:16.5px;transform:scaleX(1.0308);">different </span>
<span class="t" style="left:885.47px;top:471px;font-size:16.5px;transform:scaleX(0.9714);">Geo </span>
<span class="t" style="left:919.57px;top:471px;font-size:16.5px;transform:scaleX(0.9876);">Locations</span>
<span class="t" style="left:1034.90px;top:472px;font-size:15.4px;transform:scaleX(0.9592);">Unhandled</span>
<span class="t" style="left:1156.17px;top:471px;font-size:16.5px;transform:scaleX(0.9752);">SIEM</span>
<span class="t" style="left:1281.54px;top:471px;font-size:16.5px;transform:scaleX(1.0194);">9</span>
<span class="t" style="left:1378.13px;top:471px;font-size:16.5px;transform:scaleX(1.0289);">Critical</span>
<span class="t" style="left:1468.21px;top:471px;font-size:16.5px;transform:scaleX(1.0578);">2024-04-26</span>
<span class="t" style="left:1561.88px;top:471px;font-size:16.5px;transform:scaleX(1.0302);">09:52:12</span>
<span class="t" style="left:81.00px;top:506px;font-size:16.5px;transform:scaleX(0.9614);">Failed </span>
<span class="t" style="left:127.83px;top:506px;font-size:16.5px;transform:scaleX(1.0307);">authentication </span>
<span class="t" style="left:237.83px;top:506px;font-size:16.5px;transform:scaleX(1.0902);">to </span>
<span class="t" style="left:256.85px;top:506px;font-size:16.5px;transform:scaleX(1.0000);">domain: </span>
<span class="t" style="left:318.27px;top:506px;font-size:16.5px;transform:scaleX(0.9828);">LAB </span>
<span class="t" style="left:352.72px;top:506px;font-size:16.5px;transform:scaleX(0.9846);">by </span>
<span class="t" style="left:374.11px;top:506px;font-size:16.5px;transform:scaleX(0.9927);">user: </span>
<span class="t" style="left:413.83px;top:506px;font-size:16.5px;transform:scaleX(1.0224);">S-1-0-0 </span>
<span class="t" style="left:474.84px;top:506px;font-size:16.5px;transform:scaleX(1.0268);">from </span>
<span class="t" style="left:512.93px;top:506px;font-size:16.5px;transform:scaleX(1.0308);">different </span>
<span class="t" style="left:578.86px;top:506px;font-size:16.5px;transform:scaleX(0.8906);">IP </span>
<span class="t" style="left:597.10px;top:506px;font-size:16.5px;transform:scaleX(0.9579);">Addresses</span>
<span class="t" style="left:1034.90px;top:507px;font-size:15.4px;transform:scaleX(0.9592);">Unhandled</span>
<span class="t" style="left:1156.17px;top:506px;font-size:16.5px;transform:scaleX(0.9752);">SIEM</span>
<span class="t" style="left:1281.67px;top:506px;font-size:16.5px;transform:scaleX(1.0667);">16</span>
<span class="t" style="left:1377.95px;top:506px;font-size:16.5px;transform:scaleX(1.0409);">Medium</span>
<span class="t" style="left:1468.21px;top:506px;font-size:16.5px;transform:scaleX(1.0578);">2024-04-26</span>
<span class="t" style="left:1561.88px;top:506px;font-size:16.5px;transform:scaleX(1.0302);">09:52:12</span>
<span class="t" style="left:82.20px;top:541px;font-size:16.5px;transform:scaleX(1.0367);">Authentication </span>
<span class="t" style="left:194.23px;top:541px;font-size:16.5px;transform:scaleX(1.0902);">to </span>
<span class="t" style="left:213.35px;top:541px;font-size:16.5px;transform:scaleX(1.0000);">domain: </span>
<span class="t" style="left:275.47px;top:541px;font-size:16.5px;transform:scaleX(0.9828);">LAB </span>
<span class="t" style="left:310.02px;top:541px;font-size:16.5px;transform:scaleX(0.9846);">by </span>
<span class="t" style="left:331.41px;top:541px;font-size:16.5px;transform:scaleX(0.9927);">user: </span>
<span class="t" style="left:371.13px;top:541px;font-size:16.5px;transform:scaleX(1.0224);">S-1-0-0 </span>
<span class="t" style="left:431.74px;top:541px;font-size:16.5px;transform:scaleX(1.0268);">from </span>
<span class="t" style="left:470.23px;top:541px;font-size:16.5px;transform:scaleX(1.0308);">different </span>
<span class="t" style="left:535.87px;top:541px;font-size:16.5px;transform:scaleX(0.9714);">Geo </span>
<span class="t" style="left:569.97px;top:541px;font-size:16.5px;transform:scaleX(0.9876);">Locations</span>
<span class="t" style="left:1034.90px;top:542px;font-size:15.4px;transform:scaleX(0.9592);">Unhandled</span>
<span class="t" style="left:1156.17px;top:541px;font-size:16.5px;transform:scaleX(0.9752);">SIEM</span>
<span class="t" style="left:1281.67px;top:541px;font-size:16.5px;transform:scaleX(1.0667);">16</span>
<span class="t" style="left:1378.13px;top:541px;font-size:16.5px;transform:scaleX(1.0289);">Critical</span>
<span class="t" style="left:1468.21px;top:541px;font-size:16.5px;transform:scaleX(1.0578);">2024-04-26</span>
<span class="t" style="left:1561.88px;top:541px;font-size:16.5px;transform:scaleX(1.0302);">09:52:12</span>
<span class="t" style="left:82.20px;top:577px;font-size:16.5px;transform:scaleX(1.0367);">Authentication </span>
<span class="t" style="left:194.23px;top:577px;font-size:16.5px;transform:scaleX(1.0902);">to </span>
<span class="t" style="left:213.35px;top:577px;font-size:16.5px;transform:scaleX(1.0000);">domain: </span>
<span class="t" style="left:275.47px;top:577px;font-size:16.5px;transform:scaleX(0.9828);">LAB </span>
<span class="t" style="left:310.02px;top:577px;font-size:16.5px;transform:scaleX(0.9846);">by </span>
<span class="t" style="left:331.41px;top:577px;font-size:16.5px;transform:scaleX(0.9927);">user: </span>
<span class="t" style="left:371.13px;top:577px;font-size:16.5px;transform:scaleX(1.0224);">S-1-0-0 </span>
<span class="t" style="left:431.74px;top:577px;font-size:16.5px;transform:scaleX(1.0268);">from </span>
<span class="t" style="left:470.23px;top:577px;font-size:16.5px;transform:scaleX(1.0308);">different </span>
<span class="t" style="left:535.87px;top:577px;font-size:16.5px;transform:scaleX(0.9714);">Geo </span>
<span class="t" style="left:569.97px;top:577px;font-size:16.5px;transform:scaleX(0.9876);">Locations</span>
<span class="t" style="left:1034.90px;top:578px;font-size:15.4px;transform:scaleX(0.9592);">Unhandled</span>
<span class="t" style="left:1156.17px;top:577px;font-size:16.5px;transform:scaleX(0.9752);">SIEM</span>
<span class="t" style="left:1281.50px;top:577px;font-size:16.5px;transform:scaleX(1.0710);">6</span>
<span class="t" style="left:1378.13px;top:577px;font-size:16.5px;transform:scaleX(1.0289);">Critical</span>
<span class="t" style="left:1468.21px;top:577px;font-size:16.5px;transform:scaleX(1.0547);">2024-04-24</span>
<span class="t" style="left:1561.10px;top:577px;font-size:16.5px;transform:scaleX(1.0426);">13:24:48</span>
<span class="t" style="left:82.20px;top:612px;font-size:16.5px;transform:scaleX(1.0367);">Authentication </span>
<span class="t" style="left:194.23px;top:612px;font-size:16.5px;transform:scaleX(1.0902);">to </span>
<span class="t" style="left:213.35px;top:612px;font-size:16.5px;transform:scaleX(1.0000);">domain: </span>
<span class="t" style="left:275.47px;top:612px;font-size:16.5px;transform:scaleX(0.9828);">LAB </span>
<span class="t" style="left:310.02px;top:612px;font-size:16.5px;transform:scaleX(0.9846);">by </span>
<span class="t" style="left:331.41px;top:612px;font-size:16.5px;transform:scaleX(0.9927);">user: </span>
<span class="t" style="left:371.13px;top:612px;font-size:16.5px;transform:scaleX(1.0224);">S-1-0-0 </span>
<span class="t" style="left:431.74px;top:612px;font-size:16.5px;transform:scaleX(1.0268);">from </span>
<span class="t" style="left:470.23px;top:612px;font-size:16.5px;transform:scaleX(1.0308);">different </span>
<span class="t" style="left:535.87px;top:612px;font-size:16.5px;transform:scaleX(0.9714);">Geo </span>
<span class="t" style="left:569.97px;top:612px;font-size:16.5px;transform:scaleX(0.9876);">Locations</span>
<span class="t" style="left:1034.90px;top:613px;font-size:15.4px;transform:scaleX(0.9592);">Unhandled</span>
<span class="t" style="left:1156.17px;top:612px;font-size:16.5px;transform:scaleX(0.9752);">SIEM</span>
<span class="t" style="left:1281.74px;top:612px;font-size:16.5px;transform:scaleX(1.0588);">4</span>
<span class="t" style="left:1378.13px;top:612px;font-size:16.5px;transform:scaleX(1.0289);">Critical</span>
<span class="t" style="left:1468.21px;top:612px;font-size:16.5px;transform:scaleX(1.0547);">2024-04-24</span>
<span class="t" style="left:1561.07px;top:612px;font-size:16.5px;transform:scaleX(1.0639);">11:18:18</span>
<span class="t" style="left:82.20px;top:647px;font-size:16.5px;transform:scaleX(1.0367);">Authentication </span>
<span class="t" style="left:194.23px;top:647px;font-size:16.5px;transform:scaleX(1.0902);">to </span>
<span class="t" style="left:213.35px;top:647px;font-size:16.5px;transform:scaleX(1.0000);">domain: </span>
<span class="t" style="left:275.47px;top:647px;font-size:16.5px;transform:scaleX(0.9828);">LAB </span>
<span class="t" style="left:310.02px;top:647px;font-size:16.5px;transform:scaleX(0.9846);">by </span>
<span class="t" style="left:331.41px;top:647px;font-size:16.5px;transform:scaleX(0.9927);">user: </span>
<span class="t" style="left:371.12px;top:647px;font-size:16.5px;transform:scaleX(1.0434);">S-1-5-21-403198998-4030749059-4005003723-1603 </span>
<span class="t" style="left:781.34px;top:647px;font-size:16.5px;transform:scaleX(1.0268);">from </span>
<span class="t" style="left:819.83px;top:647px;font-size:16.5px;transform:scaleX(1.0308);">different </span>
<span class="t" style="left:885.47px;top:647px;font-size:16.5px;transform:scaleX(0.9714);">Geo </span>
<span class="t" style="left:919.57px;top:647px;font-size:16.5px;transform:scaleX(0.9876);">Locations</span>
<span class="t" style="left:1034.90px;top:648px;font-size:15.4px;transform:scaleX(0.9592);">Unhandled</span>
<span class="t" style="left:1156.17px;top:647px;font-size:16.5px;transform:scaleX(0.9752);">SIEM</span>
<span class="t" style="left:1281.28px;top:647px;font-size:16.5px;transform:scaleX(1.0933);">2</span>
<span class="t" style="left:1378.13px;top:647px;font-size:16.5px;transform:scaleX(1.0289);">Critical</span>
<span class="t" style="left:1468.21px;top:647px;font-size:16.5px;transform:scaleX(1.0547);">2024-04-24</span>
<span class="t" style="left:1561.10px;top:647px;font-size:16.5px;transform:scaleX(1.0426);">10:59:12</span>
<span class="t" style="left:82.20px;top:682px;font-size:16.5px;transform:scaleX(1.0367);">Authentication </span>
<span class="t" style="left:194.23px;top:682px;font-size:16.5px;transform:scaleX(1.0902);">to </span>
<span class="t" style="left:213.35px;top:682px;font-size:16.5px;transform:scaleX(1.0000);">domain: </span>
<span class="t" style="left:275.47px;top:682px;font-size:16.5px;transform:scaleX(0.9828);">LAB </span>
<span class="t" style="left:310.02px;top:682px;font-size:16.5px;transform:scaleX(0.9846);">by </span>
<span class="t" style="left:331.41px;top:682px;font-size:16.5px;transform:scaleX(0.9927);">user: </span>
<span class="t" style="left:371.13px;top:682px;font-size:16.5px;transform:scaleX(1.0224);">S-1-0-0 </span>
<span class="t" style="left:431.74px;top:682px;font-size:16.5px;transform:scaleX(1.0268);">from </span>
<span class="t" style="left:470.23px;top:682px;font-size:16.5px;transform:scaleX(1.0308);">different </span>
<span class="t" style="left:535.87px;top:682px;font-size:16.5px;transform:scaleX(0.9714);">Geo </span>
<span class="t" style="left:569.97px;top:682px;font-size:16.5px;transform:scaleX(0.9876);">Locations</span>
<span class="t" style="left:1034.90px;top:683px;font-size:15.4px;transform:scaleX(0.9592);">Unhandled</span>
<span class="t" style="left:1156.17px;top:682px;font-size:16.5px;transform:scaleX(0.9752);">SIEM</span>
<span class="t" style="left:1281.68px;top:682px;font-size:16.5px;transform:scaleX(1.0545);">15</span>
<span class="t" style="left:1378.13px;top:682px;font-size:16.5px;transform:scaleX(1.0289);">Critical</span>
<span class="t" style="left:1468.21px;top:682px;font-size:16.5px;transform:scaleX(1.0578);">2024-04-18</span>
<span class="t" style="left:1561.10px;top:682px;font-size:16.5px;transform:scaleX(1.0426);">15:34:00</span>
<span class="t" style="left:81.49px;top:717px;font-size:16.5px;transform:scaleX(0.9474);">Successful </span>
<span class="t" style="left:160.73px;top:717px;font-size:16.5px;transform:scaleX(1.0307);">authentication </span>
<span class="t" style="left:270.73px;top:717px;font-size:16.5px;transform:scaleX(1.0902);">to </span>
<span class="t" style="left:289.65px;top:717px;font-size:16.5px;transform:scaleX(1.0000);">domain: </span>
<span class="t" style="left:351.67px;top:717px;font-size:16.5px;transform:scaleX(0.9828);">LAB </span>
<span class="t" style="left:386.12px;top:717px;font-size:16.5px;transform:scaleX(0.9846);">by </span>
<span class="t" style="left:407.51px;top:717px;font-size:16.5px;transform:scaleX(0.9927);">user: </span>
<span class="t" style="left:447.22px;top:717px;font-size:16.5px;transform:scaleX(1.0434);">S-1-5-21-403198998-4030749059-4005003723-1603 </span>
<span class="t" style="left:858.14px;top:717px;font-size:16.5px;transform:scaleX(1.0268);">from </span>
<span class="t" style="left:896.23px;top:717px;font-size:16.5px;transform:scaleX(1.0308);">different </span>
<span class="t" style="left:962.36px;top:717px;font-size:16.5px;transform:scaleX(0.8906);">IP </span>
<span class="t" style="left:980.50px;top:717px;font-size:16.5px;transform:scaleX(1.0012);width:43.85px;overflow:hidden;">Addresses</span>
<span class="t" style="left:1034.90px;top:719px;font-size:15.4px;transform:scaleX(0.9592);">Unhandled</span>
<span class="t" style="left:1156.17px;top:717px;font-size:16.5px;transform:scaleX(0.9752);">SIEM</span>
<span class="t" style="left:1281.54px;top:717px;font-size:16.5px;transform:scaleX(1.0194);">9</span>
<span class="t" style="left:1377.95px;top:717px;font-size:16.5px;transform:scaleX(1.0409);">Medium</span>
<span class="t" style="left:1468.21px;top:717px;font-size:16.5px;transform:scaleX(1.0578);">2024-04-18</span>
<span class="t" style="left:1561.10px;top:717px;font-size:16.5px;transform:scaleX(1.0426);">15:34:00</span>
<span class="t" style="left:81.00px;top:753px;font-size:16.5px;transform:scaleX(0.9614);">Failed </span>
<span class="t" style="left:127.83px;top:753px;font-size:16.5px;transform:scaleX(1.0307);">authentication </span>
<span class="t" style="left:237.83px;top:753px;font-size:16.5px;transform:scaleX(1.0902);">to </span>
<span class="t" style="left:256.85px;top:753px;font-size:16.5px;transform:scaleX(1.0000);">domain: </span>
<span class="t" style="left:318.27px;top:753px;font-size:16.5px;transform:scaleX(0.9828);">LAB </span>
<span class="t" style="left:352.72px;top:753px;font-size:16.5px;transform:scaleX(0.9846);">by </span>
<span class="t" style="left:374.11px;top:753px;font-size:16.5px;transform:scaleX(0.9927);">user: </span>
<span class="t" style="left:413.83px;top:753px;font-size:16.5px;transform:scaleX(1.0224);">S-1-0-0 </span>
<span class="t" style="left:474.84px;top:753px;font-size:16.5px;transform:scaleX(1.0268);">from </span>
<span class="t" style="left:512.93px;top:753px;font-size:16.5px;transform:scaleX(1.0308);">different </span>
<span class="t" style="left:578.86px;top:753px;font-size:16.5px;transform:scaleX(0.8906);">IP </span>
<span class="t" style="left:597.10px;top:753px;font-size:16.5px;transform:scaleX(0.9579);">Addresses</span>
<span class="t" style="left:1034.90px;top:754px;font-size:15.4px;transform:scaleX(0.9592);">Unhandled</span>
<span class="t" style="left:1156.17px;top:753px;font-size:16.5px;transform:scaleX(0.9752);">SIEM</span>
<span class="t" style="left:1281.68px;top:753px;font-size:16.5px;transform:scaleX(1.0545);">15</span>
<span class="t" style="left:1377.95px;top:753px;font-size:16.5px;transform:scaleX(1.0409);">Medium</span>
<span class="t" style="left:1468.21px;top:753px;font-size:16.5px;transform:scaleX(1.0578);">2024-04-18</span>
<span class="t" style="left:1561.10px;top:753px;font-size:16.5px;transform:scaleX(1.0426);">15:34:00</span>
<span class="t" style="left:82.20px;top:788px;font-size:16.5px;transform:scaleX(1.0367);">Authentication </span>
<span class="t" style="left:194.23px;top:788px;font-size:16.5px;transform:scaleX(1.0902);">to </span>
<span class="t" style="left:213.35px;top:788px;font-size:16.5px;transform:scaleX(1.0000);">domain: </span>
<span class="t" style="left:275.47px;top:788px;font-size:16.5px;transform:scaleX(0.9828);">LAB </span>
<span class="t" style="left:310.02px;top:788px;font-size:16.5px;transform:scaleX(0.9846);">by </span>
<span class="t" style="left:331.41px;top:788px;font-size:16.5px;transform:scaleX(0.9927);">user: </span>
<span class="t" style="left:371.12px;top:788px;font-size:16.5px;transform:scaleX(1.0434);">S-1-5-21-403198998-4030749059-4005003723-1603 </span>
<span class="t" style="left:781.34px;top:788px;font-size:16.5px;transform:scaleX(1.0268);">from </span>
<span class="t" style="left:819.83px;top:788px;font-size:16.5px;transform:scaleX(1.0308);">different </span>
<span class="t" style="left:885.47px;top:788px;font-size:16.5px;transform:scaleX(0.9714);">Geo </span>
<span class="t" style="left:919.57px;top:788px;font-size:16.5px;transform:scaleX(0.9876);">Locations</span>
<span class="t" style="left:1034.90px;top:789px;font-size:15.4px;transform:scaleX(0.9592);">Unhandled</span>
<span class="t" style="left:1156.17px;top:788px;font-size:16.5px;transform:scaleX(0.9752);">SIEM</span>
<span class="t" style="left:1281.54px;top:788px;font-size:16.5px;transform:scaleX(1.0194);">9</span>
<span class="t" style="left:1378.13px;top:788px;font-size:16.5px;transform:scaleX(1.0289);">Critical</span>
<span class="t" style="left:1468.21px;top:788px;font-size:16.5px;transform:scaleX(1.0578);">2024-04-18</span>
<span class="t" style="left:1561.10px;top:788px;font-size:16.5px;transform:scaleX(1.0426);">15:34:00</span>
</body></html>
